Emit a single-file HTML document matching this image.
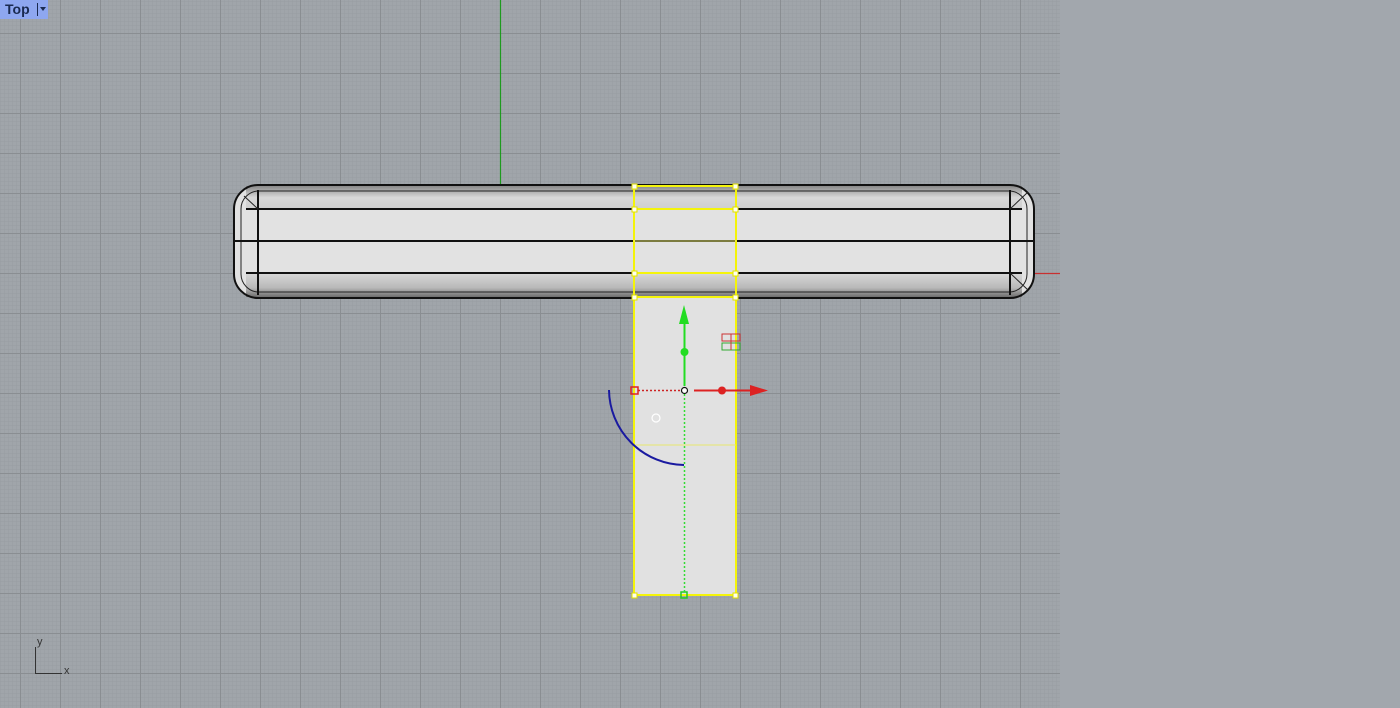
<!DOCTYPE html>
<html><head><style>
html,body{margin:0;padding:0;width:1400px;height:708px;overflow:hidden;background:#a2a7ad;font-family:"Liberation Sans",sans-serif}
.tab{position:absolute;left:0;top:0;width:48px;height:19px;background:#8ea7f0;}
</style></head><body>
<svg width="1400" height="708" style="position:absolute;left:0;top:0">
<defs>
<pattern id="minor" x="0" y="1" width="4" height="4" patternUnits="userSpaceOnUse">
<path d="M0 0H4M0 0V4" stroke="#989da2" stroke-width="1" fill="none"/>
</pattern>
<pattern id="major" x="20" y="33" width="40" height="40" patternUnits="userSpaceOnUse">
<path d="M0 0.5H40M0.5 0V40" stroke="#8a8e92" stroke-width="1" fill="none"/>
</pattern>
<linearGradient id="top" x1="0" y1="0" x2="0" y2="1">
<stop offset="0" stop-color="#8a8a8a"/><stop offset="0.5" stop-color="#d8d8d8"/><stop offset="1" stop-color="#cfcfcf"/>
</linearGradient>
<linearGradient id="bot" x1="0" y1="0" x2="0" y2="1">
<stop offset="0" stop-color="#d6d6d6"/><stop offset="0.6" stop-color="#b8b8b8"/><stop offset="1" stop-color="#6f6f6f"/>
</linearGradient>
</defs>
<rect x="0" y="0" width="1060" height="708" fill="#a0a5aa"/>
<rect x="0" y="0" width="1060" height="708" fill="url(#minor)"/>
<rect x="0" y="0" width="1060" height="708" fill="url(#major)"/>
<line x1="500.5" y1="0" x2="500.5" y2="190" stroke="#1e9a1e" stroke-width="1.2"/>
<line x1="1030" y1="273.5" x2="1060" y2="273.5" stroke="#c83030" stroke-width="1.2"/>
<rect x="234" y="185" width="800" height="113" rx="24" fill="#e2e2e2"/>
<rect x="246" y="186" width="776" height="23" fill="url(#top)"/>
<rect x="246" y="274" width="776" height="23" fill="url(#bot)"/>
<rect x="234" y="185" width="800" height="113" rx="24" fill="none" stroke="#111" stroke-width="2"/>
<rect x="241" y="191" width="786" height="101" rx="18" fill="none" stroke="#222" stroke-width="1"/>
<path d="M246 209H1022M234 241H1034M246 273H1022M258 190V295M1010 190V295" stroke="#111" stroke-width="2" fill="none"/>
<path d="M1010 209L1028 192M258 209L244 196M1010 273L1028 290" stroke="#222" stroke-width="1"/>
<rect x="634" y="297" width="102" height="298" fill="#e1e1e1"/>
<rect x="634" y="186" width="102" height="409" fill="none" stroke="#f4f40a" stroke-width="2"/>
<path d="M634 209H736M634 273H736M634 297H736" stroke="#f4f40a" stroke-width="2"/>
<path d="M634 241H736M634 445H736" stroke="#e8e870" stroke-width="1"/>
<g fill="#fffff0" stroke="#e0e000" stroke-width="1">
<rect x="632" y="184" width="5" height="5"/><rect x="733" y="184" width="5" height="5"/>
<rect x="632" y="207" width="5" height="5"/><rect x="733" y="207" width="5" height="5"/>
<rect x="632" y="271" width="5" height="5"/><rect x="733" y="271" width="5" height="5"/>
<rect x="632" y="295" width="5" height="5"/><rect x="733" y="295" width="5" height="5"/>
<rect x="632" y="593" width="5" height="5"/><rect x="733" y="593" width="5" height="5"/>
</g>
<rect x="681" y="592" width="6" height="6" fill="none" stroke="#22cc22" stroke-width="1.5"/>
<line x1="684.5" y1="394" x2="684.5" y2="592" stroke="#33dd33" stroke-width="1.5" stroke-dasharray="2,2"/>
<line x1="638" y1="390.5" x2="680" y2="390.5" stroke="#cc2222" stroke-width="1.5" stroke-dasharray="2,2"/>
<line x1="684.5" y1="386" x2="684.5" y2="320" stroke="#22dd22" stroke-width="2"/>
<polygon points="684,305 679,324 689,324" fill="#22dd22"/>
<circle cx="684.5" cy="352" r="4" fill="#22dd22"/>
<line x1="694" y1="390.5" x2="752" y2="390.5" stroke="#dd2222" stroke-width="2"/>
<polygon points="768,390.5 750,385 750,396" fill="#dd2222"/>
<circle cx="722" cy="390.5" r="4" fill="#dd2222"/>
<circle cx="684.5" cy="390.5" r="3" fill="#fff" stroke="#111" stroke-width="1.2"/>
<rect x="631" y="387" width="7" height="7" fill="none" stroke="#dd2222" stroke-width="1.5"/>
<path d="M609 390 A76 76 0 0 0 684 465" fill="none" stroke="#1a1aa0" stroke-width="2"/>
<circle cx="656" cy="418" r="4" fill="none" stroke="#fff" stroke-width="1.2"/>
<g fill="none" stroke-width="1">
<rect x="722" y="334" width="18" height="7" stroke="#cc3333"/>
<rect x="722" y="343" width="18" height="7" stroke="#33aa33"/>
<line x1="731" y1="334" x2="731" y2="350" stroke="#cc3333"/>
</g>
<path d="M35.5 647V673.5H62" stroke="#333" stroke-width="1" fill="none"/>
<text x="37" y="645" font-size="11" fill="#333" font-family="Liberation Sans">y</text>
<text x="64" y="674" font-size="11" fill="#333" font-family="Liberation Sans">x</text>
</svg>
<div class="tab"><span style="position:absolute;left:5px;top:1px;font-size:14px;font-weight:bold;color:#1a2a50">Top</span><span style="position:absolute;left:37px;top:3px;width:1px;height:13px;background:#1a2a50"></span><span style="position:absolute;left:40px;top:7px;width:0;height:0;border-left:3px solid transparent;border-right:3px solid transparent;border-top:4px solid #1a2a50"></span></div>
</body></html>
